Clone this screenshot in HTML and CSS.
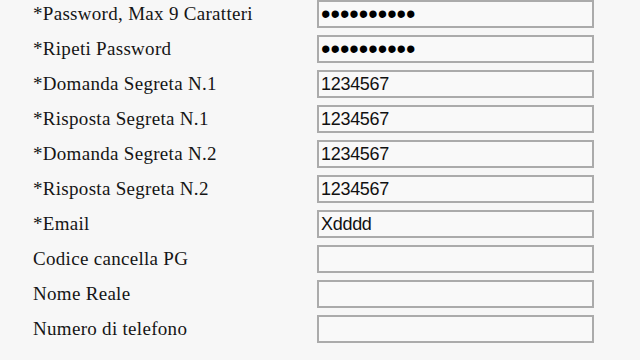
FILE: index.html
```html
<!DOCTYPE html>
<html lang="it">
<head>
    <meta charset="UTF-8">
    <meta name="viewport" content="width=device-width, initial-scale=1.0">
    <title>Registrazione</title>
    <link rel="stylesheet" href="styles.css">
</head>
<body>
    <form class="registrazione">
        <label for="pass">*Password, Max 9 Caratteri</label>
        <input type="password" id="pass" value="1234567890">

        <label for="pass2">*Ripeti Password</label>
        <input type="password" id="pass2" value="1234567890">

        <label for="dom1">*Domanda Segreta N.1</label>
        <input type="text" id="dom1" value="1234567">

        <label for="ris1">*Risposta Segreta N.1</label>
        <input type="text" id="ris1" value="1234567">

        <label for="dom2">*Domanda Segreta N.2</label>
        <input type="text" id="dom2" value="1234567">

        <label for="ris2">*Risposta Segreta N.2</label>
        <input type="text" id="ris2" value="1234567">

        <label for="email">*Email</label>
        <input type="text" id="email" value="Xdddd">

        <label for="codice">Codice cancella PG</label>
        <input type="text" id="codice">

        <label for="nome">Nome Reale</label>
        <input type="text" id="nome">

        <label for="tel">Numero di telefono</label>
        <input type="text" id="tel">
    </form>
</body>
</html>
```

FILE: styles.css
```css
body {
    margin: 0;
    padding: 0;
    background-color: #f7f7f7;
}

.registrazione {
    display: grid;
    grid-template-columns: 284px 277px;
    row-gap: 7px;
    align-items: center;
    padding-left: 33px;
}

label {
    font-family: "Liberation Serif", "Times New Roman", serif;
    font-size: 19px;
    letter-spacing: 0.3px;
    color: #151515;
    line-height: 28px;
}

input[type="text"],
input[type="password"] {
    height: 28px;
    margin: 0;
    padding: 0 2px;
    border: 2px solid #ababab;
    border-radius: 0;
    background-color: #f9f9f9;
    box-sizing: border-box;
    font-family: "Liberation Sans", Arial, sans-serif;
    font-size: 18px;
    letter-spacing: -0.3px;
    color: #111;
    outline: none;
}

input[type="password"] {
    font-size: 27px;
    letter-spacing: 0;
    color: #000;
}
```
